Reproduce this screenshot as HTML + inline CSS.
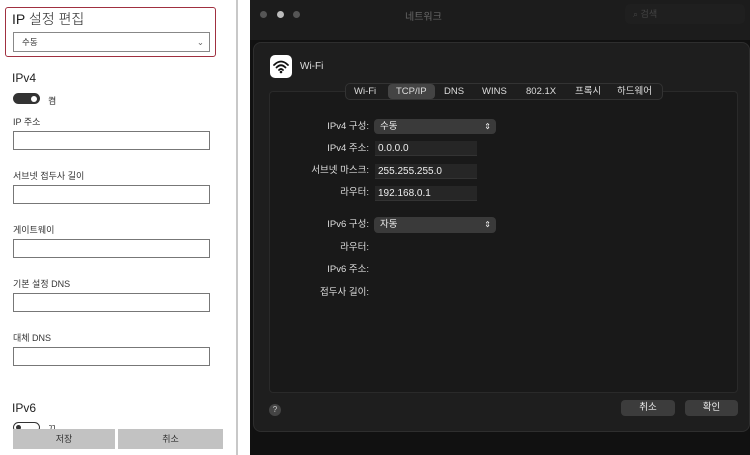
<!DOCTYPE html>
<html><head><meta charset="utf-8"><style>
*{margin:0;padding:0;box-sizing:border-box}
body{width:750px;height:455px;overflow:hidden;background:#fff;font-family:"Liberation Sans","Noto Sans CJK KR",sans-serif;position:relative}
.a{position:absolute}
.lbl{font-size:9px;color:#333}
.inp{position:absolute;left:13px;width:197px;height:19px;border:1px solid #777;background:#fff}
.dk{color:#ddd;font-size:9.5px;line-height:12px}
.r{text-align:right;width:120px;left:249px}
.fld{position:absolute;left:375px;width:102px;height:15px;background:#262626;border-bottom:1px solid #333;color:#eee;font-size:10px;line-height:15px;padding:0 3px}
.tab{position:absolute;top:0;line-height:15px}
</style></head><body>
<div class="a" style="left:5px;top:7px;width:211px;height:50px;border:1px solid #a03040;border-radius:3px"></div>
<div class="a" style="left:12px;top:9px;font-size:14px;color:#222;font-weight:300">IP 설정 편집</div>
<div class="a" style="left:13px;top:32px;width:197px;height:20px;border:1px solid #888;font-size:8.5px;color:#333;padding:0 8px;line-height:18px">수동<span style="position:absolute;right:5px;top:0;color:#666">⌄</span></div>
<div class="a" style="left:12px;top:71px;font-size:12px;color:#222">IPv4</div>
<div class="a" style="left:13px;top:93px;width:27px;height:11px;border-radius:6px;background:#333"><div class="a" style="right:3px;top:2.5px;width:6px;height:6px;border-radius:50%;background:#fff"></div></div>
<div class="a lbl" style="left:48px;top:94px">켬</div>
<div class="a lbl" style="left:13px;top:115px">IP 주소</div><div class="inp" style="top:131px"></div>
<div class="a lbl" style="left:13px;top:169px">서브넷 접두사 길이</div><div class="inp" style="top:185px"></div>
<div class="a lbl" style="left:13px;top:223px">게이트웨이</div><div class="inp" style="top:239px"></div>
<div class="a lbl" style="left:13px;top:277px">기본 설정 DNS</div><div class="inp" style="top:293px"></div>
<div class="a lbl" style="left:13px;top:331px">대체 DNS</div><div class="inp" style="top:347px"></div>
<div class="a" style="left:12px;top:401px;font-size:12px;color:#222">IPv6</div>
<div class="a" style="left:13px;top:422px;width:27px;height:11px;border-radius:6px;border:1px solid #333"><div class="a" style="left:2px;top:2px;width:5px;height:5px;border-radius:50%;background:#333"></div></div>
<div class="a lbl" style="left:48px;top:422px">끄</div>
<div class="a" style="left:13px;top:429px;width:102px;height:20px;background:#c2c2c2;font-size:9px;text-align:center;line-height:20px;color:#333">저장</div>
<div class="a" style="left:118px;top:429px;width:105px;height:20px;background:#c2c2c2;font-size:9px;text-align:center;line-height:20px;color:#333">취소</div>
<div class="a" style="left:236px;top:0;width:2px;height:455px;background:#c8c8c8"></div>
<div class="a" style="left:250px;top:0;width:500px;height:455px;background:#111"></div>
<div class="a" style="left:250px;top:0;width:500px;height:40px;background:#1c1c1c"></div>
<div class="a" style="left:260px;top:11px;width:7px;height:7px;border-radius:50%;background:#555"></div>
<div class="a" style="left:277px;top:11px;width:7px;height:7px;border-radius:50%;background:#bbb"></div>
<div class="a" style="left:293px;top:11px;width:7px;height:7px;border-radius:50%;background:#555"></div>
<div class="a" style="left:405px;top:8px;font-size:10px;color:#666">네트워크</div>
<div class="a" style="left:625px;top:4px;width:120px;height:20px;background:#1f1f1f;border-radius:5px;font-size:9px;color:#444;padding:0 8px;line-height:20px">⌕ 검색</div>
<div class="a" style="left:253px;top:42px;width:497px;height:390px;background:#1e1e1e;border:1px solid #2e2e2e;border-radius:8px"></div>
<div class="a" style="left:270px;top:55px;width:22px;height:23px;background:#fff;border-radius:5px">
<svg width="22" height="23" viewBox="0 0 22 23"><path d="M4 10 Q11 3 18 10 M6.5 12.5 Q11 8 15.5 12.5 M9 15 Q11 13 13 15" stroke="#111" stroke-width="1.8" fill="none" stroke-linecap="round"/><circle cx="11" cy="17" r="1.3" fill="#111"/></svg></div>
<div class="a" style="left:300px;top:61px;font-size:10px;color:#ddd">Wi-Fi</div>
<div class="a" style="left:269px;top:91px;width:469px;height:302px;background:#191919;border:1px solid #2a2a2a;border-radius:4px"></div>
<div class="a" style="left:345px;top:83px;width:318px;height:17px;background:#1e1e1e;border:1px solid #333;border-radius:5px"></div>
<div class="a" style="left:388px;top:84px;width:47px;height:15px;background:#444;border-radius:4px"></div>
<div class="a" style="top:84px;left:345px;width:318px;height:15px;font-size:9.5px;color:#ddd">
<span class="tab" style="left:9px">Wi-Fi</span><span class="tab" style="left:51px">TCP/IP</span><span class="tab" style="left:99px">DNS</span><span class="tab" style="left:137px">WINS</span><span class="tab" style="left:181px">802.1X</span><span class="tab" style="left:230px">프록시</span><span class="tab" style="left:272px">하드웨어</span></div>
<div class="a dk r" style="top:121px">IPv4 구성:</div>
<div class="a" style="left:374px;top:119px;width:122px;height:15px;background:#3a3a3a;border-radius:4px;color:#eee;font-size:9.5px;padding:0 6px;line-height:15px">수동<span style="position:absolute;right:5px;top:0;font-size:8px">⇕</span></div>
<div class="a dk r" style="top:143px">IPv4 주소:</div><div class="fld" style="top:141px">0.0.0.0</div>
<div class="a dk r" style="top:165px">서브넷 마스크:</div><div class="fld" style="top:164px">255.255.255.0</div>
<div class="a dk r" style="top:187px">라우터:</div><div class="fld" style="top:186px">192.168.0.1</div>
<div class="a dk r" style="top:219px">IPv6 구성:</div>
<div class="a" style="left:374px;top:217px;width:122px;height:16px;background:#3a3a3a;border-radius:4px;color:#eee;font-size:9.5px;padding:0 6px;line-height:16px">자동<span style="position:absolute;right:5px;top:0;font-size:8px">⇕</span></div>
<div class="a dk r" style="top:242px">라우터:</div>
<div class="a dk r" style="top:264px">IPv6 주소:</div>
<div class="a dk r" style="top:287px">접두사 길이:</div>
<div class="a" style="left:269px;top:404px;width:12px;height:12px;border-radius:50%;background:#444;color:#ccc;font-size:8px;text-align:center;line-height:12px">?</div>
<div class="a" style="left:621px;top:400px;width:54px;height:16px;background:#3c3c3c;border-radius:4px;color:#eee;font-size:9.5px;text-align:center;line-height:16px">취소</div>
<div class="a" style="left:685px;top:400px;width:53px;height:16px;background:#3c3c3c;border-radius:4px;color:#eee;font-size:9.5px;text-align:center;line-height:16px">확인</div>
</body></html>
